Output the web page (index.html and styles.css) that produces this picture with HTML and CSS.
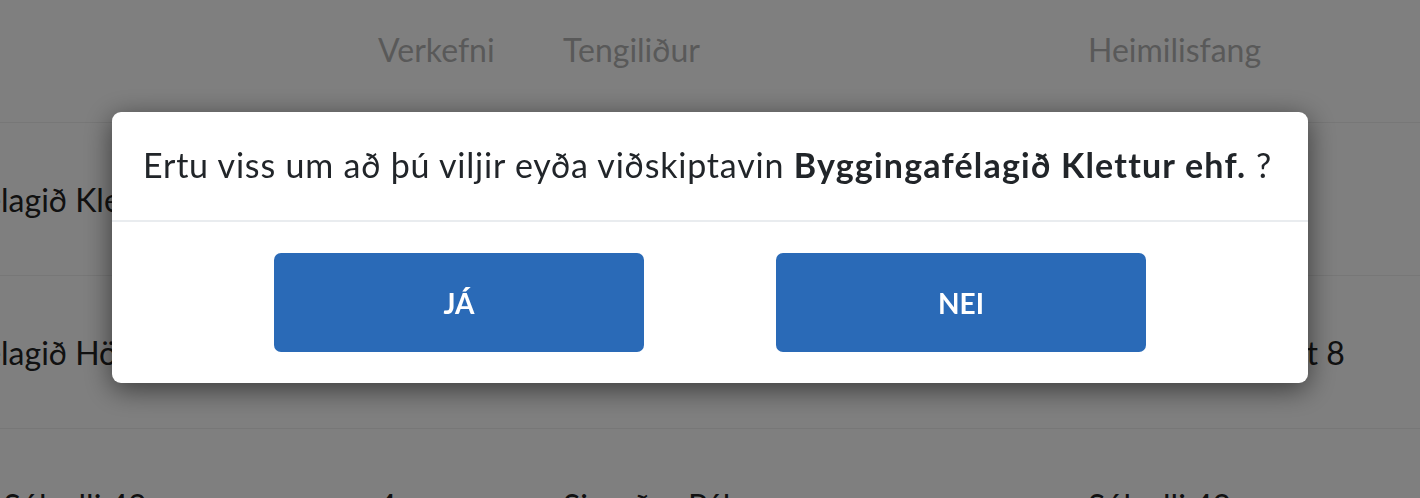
FILE: index.html
```html
<!DOCTYPE html>
<html lang="is">
<head>
<meta charset="utf-8">
<title>Viðskiptavinir</title>
<link rel="stylesheet" href="styles.css">
</head>
<body>
<div class="page">
  <div class="table">
    <div class="row head">
      <div class="cell"></div>
      <div class="cell">Verkefni</div>
      <div class="cell">Tengiliður</div>
      <div class="cell">Heimilisfang</div>
    </div>
    <div class="row">
      <div class="cell">Byggingafélagið Klettur ehf.</div>
      <div class="cell">2</div>
      <div class="cell">Jón Jónsson</div>
      <div class="cell">Klettagarðar 12</div>
    </div>
    <div class="row">
      <div class="cell">Byggingafélagið Höfði ehf.</div>
      <div class="cell">3</div>
      <div class="cell">Anna Björnsdóttir</div>
      <div class="cell">Suðurlandsbraut 8</div>
    </div>
    <div class="row">
      <div class="cell">Húsfélagið Sólvalli 42</div>
      <div class="cell">4</div>
      <div class="cell">Sigurður Pálsson</div>
      <div class="cell">Sólvalli 42</div>
    </div>
  </div>
</div>

<div class="overlay">
  <div class="modal">
    <p class="modal-body">Ertu viss um að þú viljir eyða viðskiptavin <strong>Byggingafélagið Klettur ehf.</strong> ?</p>
    <div class="modal-footer">
      <button class="btn">JÁ</button>
      <button class="btn">NEI</button>
    </div>
  </div>
</div>
</body>
</html>
```

FILE: styles.css
```css
html, body {
  margin: 0;
  padding: 0;
  height: 100%;
  overflow: hidden;
  background: #ffffff;
}

body {
  font-family: Lato, "Open Sans", sans-serif;
  color: #222222;
}

.page {
  margin-left: -154px;
}

.table {
  display: flex;
  flex-direction: column;
}

.row {
  display: grid;
  grid-template-columns: 532px 185px 525px 500px;
  height: 152px;
  align-items: center;
  border-bottom: 1px solid #eeeeee;
  font-size: 32px;
  white-space: nowrap;
}

.row.head {
  height: 122px;
  align-items: start;
  color: #b3b3b3;
}

.row.head .cell {
  padding-top: 34px;
  line-height: 32px;
}

.overlay {
  position: fixed;
  inset: 0;
  padding-bottom: 3px;
  background: rgba(0, 0, 0, 0.5);
  display: flex;
  align-items: center;
  justify-content: center;
}

.modal {
  width: 1196px;
  background: #ffffff;
  border-radius: 9px;
  box-shadow: 0 6px 28px rgba(0, 0, 0, 0.55);
  display: flex;
  flex-direction: column;
}

.modal-body {
  margin: 0;
  height: 108px;
  padding: 0 31px;
  line-height: 105px;
  font-size: 34px;
  letter-spacing: 0.8px;
  color: #212529;
  border-bottom: 2px solid #e9ecef;
  white-space: nowrap;
}

.modal-body strong {
  font-weight: 700;
  letter-spacing: 1.2px;
}

.modal-footer {
  display: flex;
  justify-content: center;
  gap: 132px;
  padding: 31px 0 31px;
}

.btn {
  width: 370px;
  height: 99px;
  border: none;
  border-radius: 7px;
  background: #2a6ab7;
  color: #ffffff;
  font-family: Lato, "Open Sans", sans-serif;
  font-weight: 700;
  font-size: 28px;
  cursor: pointer;
}
```
